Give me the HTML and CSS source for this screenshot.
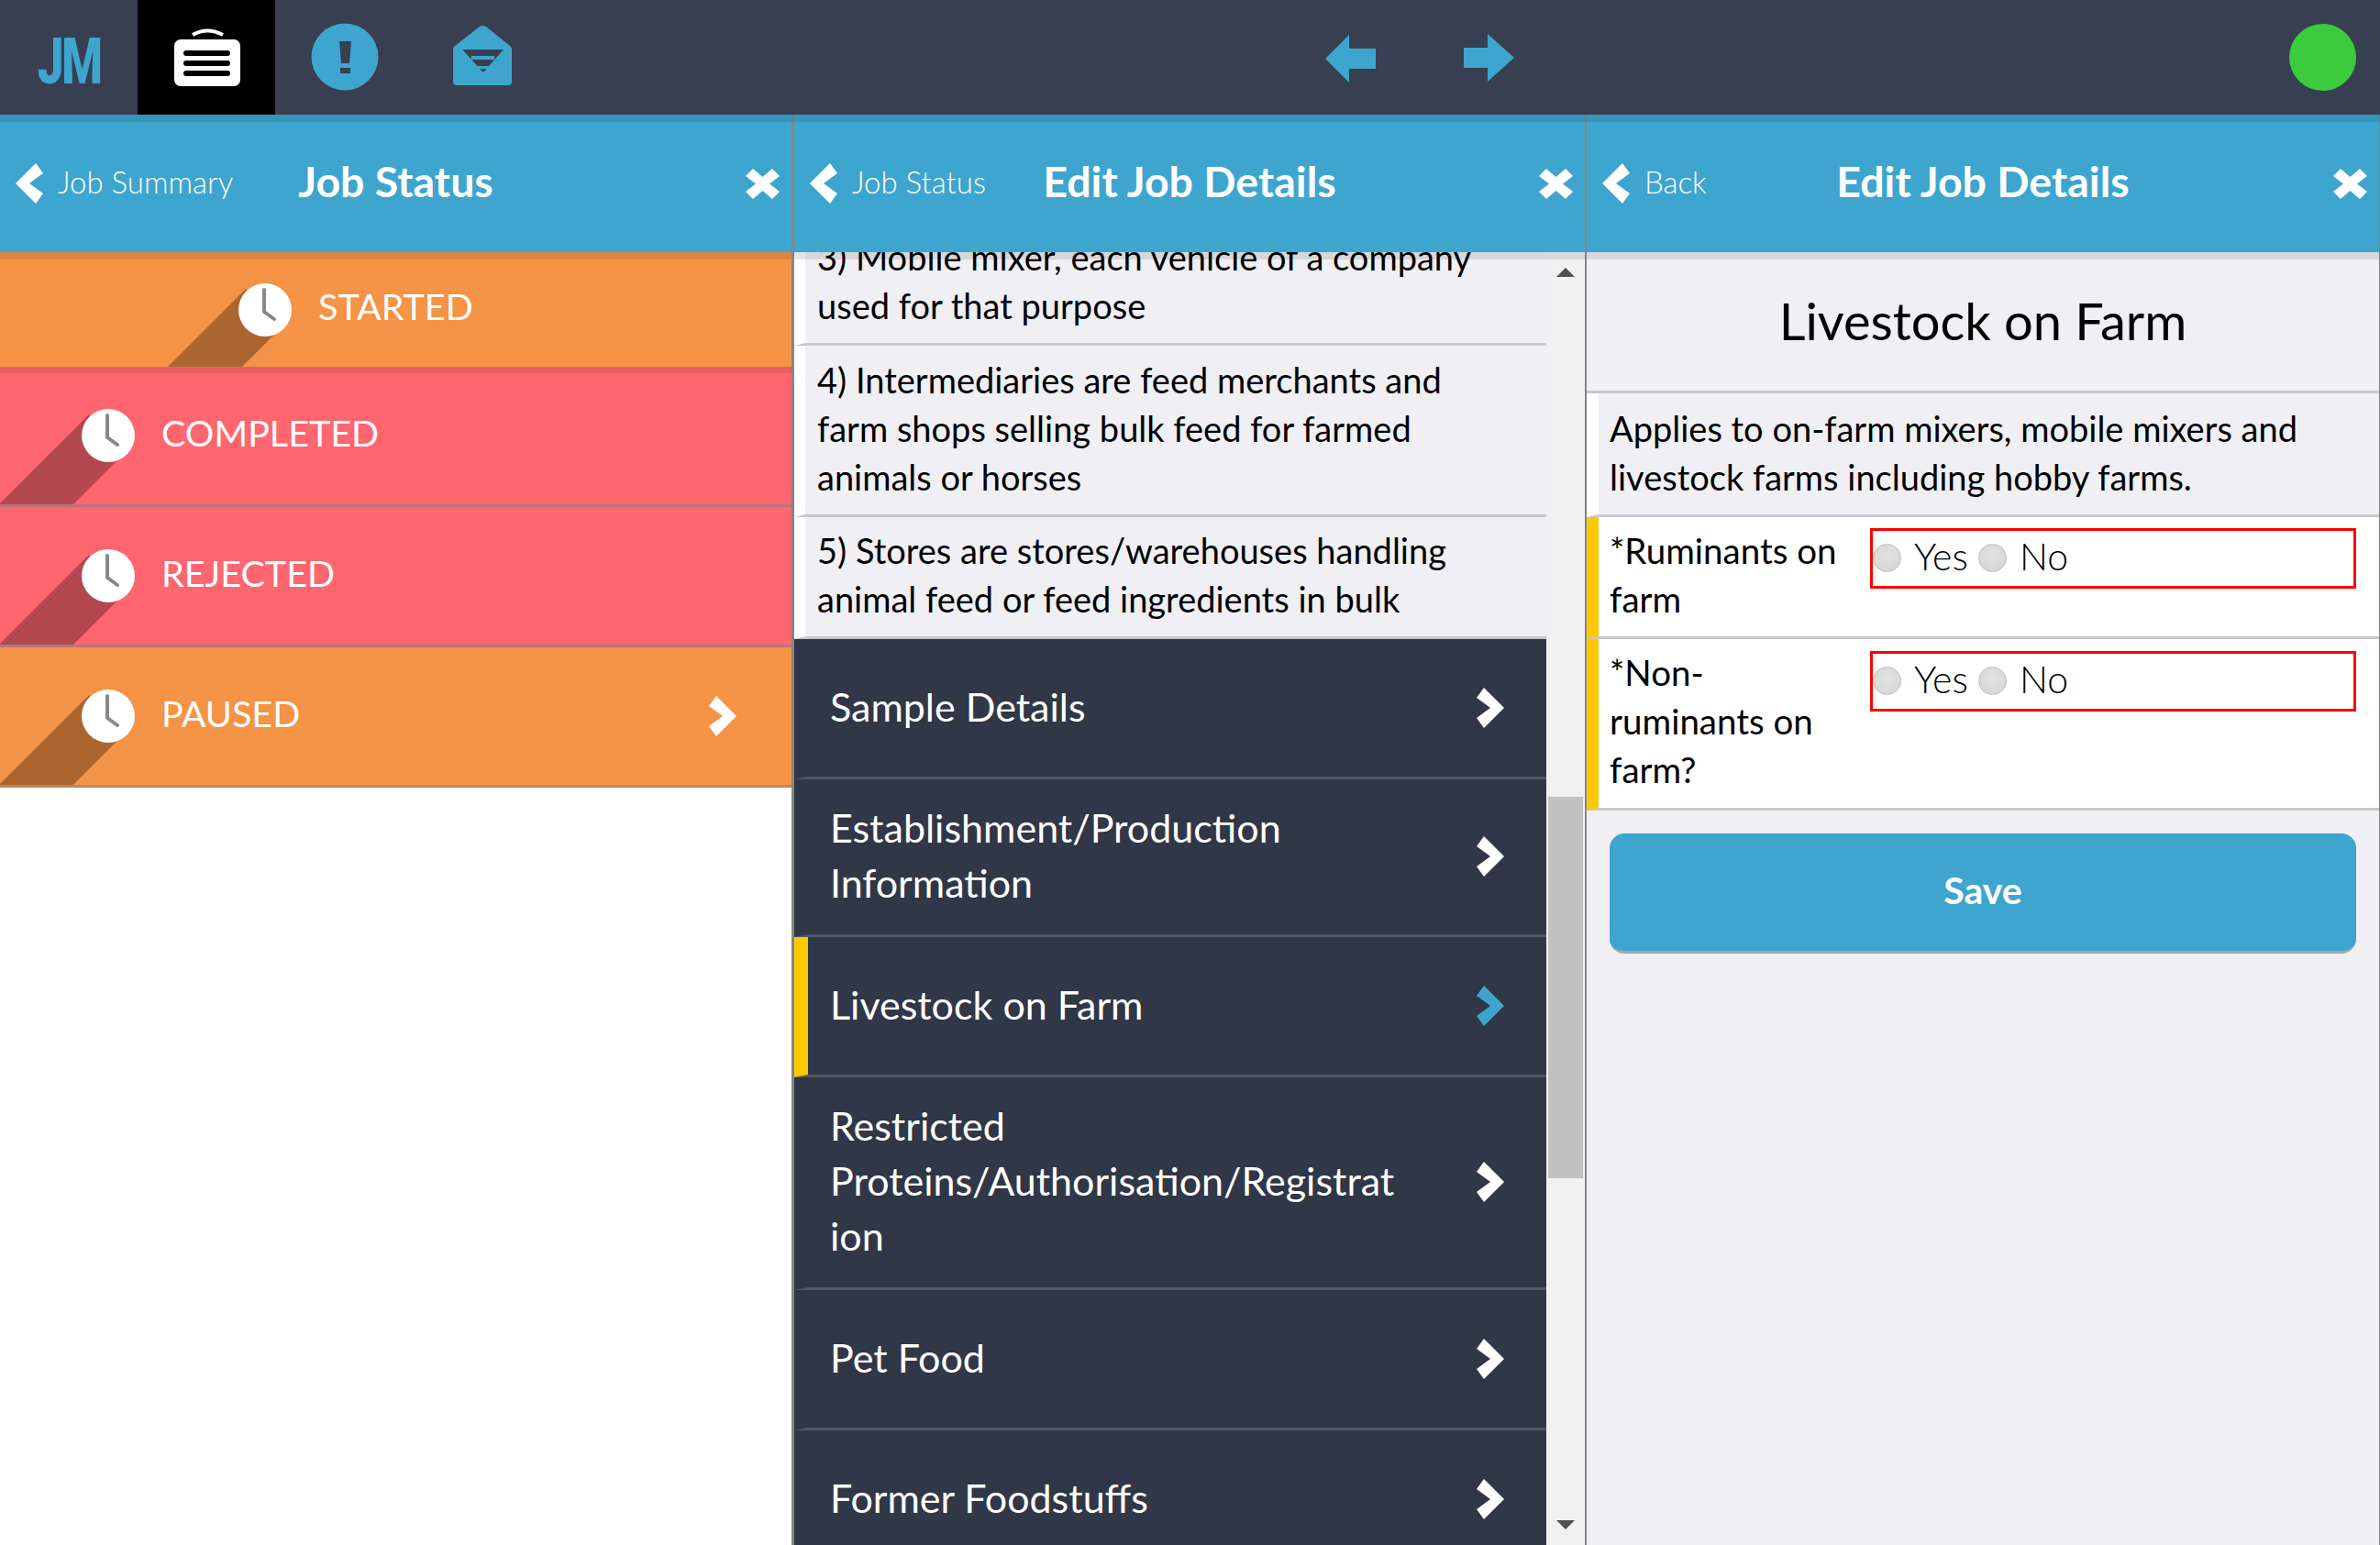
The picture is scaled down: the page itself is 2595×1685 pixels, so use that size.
FILE: index.html
```
<!DOCTYPE html>
<html>
<head>
    <title>Edit Job Details</title>
    <link rel="stylesheet" href="styles.css">
</head>
<body>
    <svg class="defs" width="0" height="0">
        <symbol id="chev-left" viewBox="0 0 30 44"><polygon points="22,0 30,11 15,22 30,33 22,44 0,22"/></symbol>
        <symbol id="chev-right" viewBox="0 0 30 44"><polygon points="8,0 0,11 15,22 0,33 8,44 30,22"/></symbol>
        <symbol id="close" viewBox="0 0 37 33"><polygon points="8,0 18.5,9 29,0 37,8 26,16.5 37,25 29,33 18.5,24 8,33 0,25 11,16.5 0,8"/></symbol>
        <symbol id="clock" viewBox="-29 -29 58 58">
            <polygon class="clock-shadow" points="-21,-23 -221,177 -140,177 10,27"/>
            <circle r="29" fill="#fff"/>
            <path d="M-1 -22V2L10 10" fill="none" stroke="#888" stroke-width="4" stroke-linecap="round" stroke-linejoin="round"/>
        </symbol>
    </svg>

    <div class="topbar">
        <div class="tab"><span class="logo">JM</span></div>
        <div class="tab tab-active">
            <svg width="150" height="125" viewBox="150 0 150 125">
                <path d="M210 38q16-9 33 0" fill="none" stroke="#fff" stroke-width="4"/>
                <rect x="190" y="43" width="72" height="51" rx="7" fill="#fff"/>
                <rect x="200" y="55" width="51" height="6" rx="3" fill="#000"/>
                <rect x="200" y="66" width="51" height="6" rx="3" fill="#000"/>
                <rect x="200" y="77" width="51" height="6" rx="3" fill="#000"/>
            </svg>
        </div>
        <div class="tab">
            <svg width="150" height="125" viewBox="300 0 150 125">
                <circle cx="376" cy="62" r="36.5" fill="#3ea5ce"/>
                <polygon points="370,45 383,45 381,69 372,69" fill="#373f51"/>
                <rect x="371" y="74" width="11" height="6" fill="#373f51"/>
            </svg>
        </div>
        <div class="tab">
            <svg width="150" height="125" viewBox="450 0 150 125">
                <path d="M523 29q3-2 7 0L556 50q2 2 2 4V89q0 4-4 4H498q-4 0-4-4V54q0-2 2-4Z" fill="#3ea5ce"/>
                <polygon points="504,54 549,54 527,79" fill="#373f51"/>
                <rect x="514" y="61" width="25" height="4" fill="#3ea5ce"/>
                <rect x="510" y="72" width="34" height="3" fill="#3ea5ce"/>
            </svg>
        </div>
        <div class="history">
            <svg width="301" height="125" viewBox="1400 0 301 125">
                <polygon points="1445,64 1471,38 1471,53 1500,53 1500,75 1471,75 1471,90" fill="#3ea5ce"/>
                <polygon points="1651,63 1622,37 1622,52 1596,52 1596,74 1622,74 1622,89" fill="#3ea5ce"/>
            </svg>
        </div>
        <div class="status-dot"></div>
    </div>

    <div class="panes">
        <div class="pane pane-status">
            <div class="pane-head">
                <div class="back"><svg class="chev"><use href="#chev-left"/></svg><span>Job Summary</span></div>
                <h1>Job Status</h1>
                <svg class="close"><use href="#close"/></svg>
            </div>
            <div class="status status-first orange">
                <svg class="clock"><use href="#clock"/></svg>
                <span>STARTED</span>
            </div>
            <div class="status red">
                <svg class="clock"><use href="#clock"/></svg>
                <span>COMPLETED</span>
            </div>
            <div class="status red">
                <svg class="clock"><use href="#clock"/></svg>
                <span>REJECTED</span>
            </div>
            <div class="status orange">
                <svg class="clock"><use href="#clock"/></svg>
                <span>PAUSED</span>
                <svg class="chev status-chev"><use href="#chev-right"/></svg>
            </div>
        </div>

        <div class="pane pane-menu">
            <div class="pane-head">
                <div class="back"><svg class="chev"><use href="#chev-left"/></svg><span>Job Status</span></div>
                <h1>Edit Job Details</h1>
                <svg class="close"><use href="#close"/></svg>
            </div>
            <div class="menu-body">
                <div class="menu-list">
                    <div class="note note-first">3) Mobile mixer, each vehicle of a company<br>used for that purpose</div>
                    <div class="note">4) Intermediaries are feed merchants and<br>farm shops selling bulk feed for farmed<br>animals or horses</div>
                    <div class="note note-last">5) Stores are stores/warehouses handling<br>animal feed or feed ingredients in bulk</div>
                    <div class="menu-row"><span>Sample Details</span><svg class="chev"><use href="#chev-right"/></svg></div>
                    <div class="menu-row"><span>Establishment/Production<br>Information</span><svg class="chev"><use href="#chev-right"/></svg></div>
                    <div class="menu-row menu-row-active"><span>Livestock on Farm</span><svg class="chev"><use href="#chev-right"/></svg></div>
                    <div class="menu-row"><span>Restricted<br>Proteins/Authorisation/Registrat<br>ion</span><svg class="chev"><use href="#chev-right"/></svg></div>
                    <div class="menu-row"><span>Pet Food</span><svg class="chev"><use href="#chev-right"/></svg></div>
                    <div class="menu-row"><span>Former Foodstuffs</span><svg class="chev"><use href="#chev-right"/></svg></div>
                </div>
                <div class="scrollbar">
                    <div class="arrow-up"></div>
                    <div class="thumb"></div>
                    <div class="arrow-down"></div>
                </div>
            </div>
        </div>

        <div class="pane pane-form">
            <div class="pane-head">
                <div class="back"><svg class="chev"><use href="#chev-left"/></svg><span>Back</span></div>
                <h1>Edit Job Details</h1>
                <svg class="close"><use href="#close"/></svg>
            </div>
            <h2 class="form-title">Livestock on Farm</h2>
            <div class="form-note">Applies to on-farm mixers, mobile mixers and<br>livestock farms including hobby farms.</div>
            <div class="form-row">
                <div class="form-label">*Ruminants on<br>farm</div>
                <div class="answer">
                    <input type="radio" name="ruminants" id="r-yes"><label for="r-yes">Yes</label>
                    <input type="radio" name="ruminants" id="r-no"><label for="r-no">No</label>
                </div>
            </div>
            <div class="form-row">
                <div class="form-label">*Non-<br>ruminants on<br>farm?</div>
                <div class="answer">
                    <input type="radio" name="nonruminants" id="n-yes"><label for="n-yes">Yes</label>
                    <input type="radio" name="nonruminants" id="n-no"><label for="n-no">No</label>
                </div>
            </div>
            <button class="save">Save</button>
        </div>
    </div>
</body>
</html>
```

FILE: styles.css
```
* {
    box-sizing: border-box;
}
html, body {
    margin: 0;
    height: 100%;
    overflow: hidden;
}
body {
    display: flex;
    flex-direction: column;
    font-family: Lato, "Open Sans", sans-serif;
    font-size: 38px;
    color: #000;
    background: #fff;
}
.defs {
    position: absolute;
}
symbol {
    overflow: visible;
}

/* top bar */
.topbar {
    display: flex;
    flex: none;
    height: 125px;
    background: #373f51;
    position: relative;
    z-index: 3;
    box-shadow: 0 8px 0 rgba(0, 0, 0, .1);
}
.tab {
    display: flex;
    align-items: center;
    justify-content: center;
    width: 150px;
}
.tab svg {
    display: block;
}
.tab-active {
    background: #000;
}
.logo {
    font-family: Roboto, sans-serif;
    font-weight: 900;
    font-size: 70px;
    line-height: 1;
    letter-spacing: -3px;
    color: #3ea5ce;
    transform: scaleX(.73);
    padding-top: 8px;
}
.history {
    margin-left: 800px;
}
.history svg {
    display: block;
}
.status-dot {
    width: 73px;
    height: 73px;
    margin: 26px 26px 0 auto;
    border-radius: 50%;
    background: #3ccb3c;
}

/* panes */
.panes {
    display: grid;
    grid-template-columns: 866px 864px 1fr;
    flex: 1;
    min-height: 0;
}
.pane {
    display: flex;
    flex-direction: column;
    min-width: 0;
    overflow: hidden;
    border-right: 3px solid #858585;
}
.pane-menu {
    border-right-width: 2px;
}
.pane-form {
    border-right-width: 1px;
    background: #efeff4;
}
.pane-head {
    display: grid;
    grid-template-columns: 1fr auto 1fr;
    align-items: center;
    flex: none;
    height: 150px;
    background: #3ea5ce;
    color: #fff;
    position: relative;
    z-index: 2;
    box-shadow: 0 8px 0 rgba(0, 0, 0, .1);
}
.pane-head h1 {
    margin: 0;
    font-size: 46.5px;
    font-weight: 700;
    padding-bottom: 6px;
}
.back {
    display: flex;
    align-items: center;
    gap: 16px;
    padding-left: 17px;
    font-size: 33px;
    font-weight: 300;
}
.back span {
    padding-bottom: 4px;
}
.chev {
    display: block;
    flex: none;
    width: 30px;
    height: 44px;
    fill: currentColor;
}
.close {
    justify-self: end;
    width: 37px;
    height: 33px;
    margin-right: 13px;
    fill: #fff;
}

/* status list */
.status {
    display: flex;
    align-items: center;
    gap: 29px;
    flex: none;
    height: 153px;
    padding-left: 89px;
    overflow: hidden;
    border-bottom: 3px solid;
    color: #fff;
    font-size: 39.5px;
}
.status span {
    padding-bottom: 8px;
}
.status-first {
    height: 125px;
    padding-left: 260px;
    border-bottom: 0;
    position: relative;
    z-index: 1;
    box-shadow: 0 7px 0 rgba(0, 0, 0, .08);
}
.orange {
    background: #f59346;
    border-color: #b58a5c;
}
.red {
    background: #ff6670;
    border-color: #b87478;
}
.clock {
    width: 58px;
    height: 58px;
    flex: none;
    overflow: visible;
}
.clock-shadow {
    fill: rgba(0, 0, 0, .3);
}
.status-chev {
    margin-left: auto;
    margin-right: 60px;
}

/* menu pane */
.menu-body {
    display: flex;
    flex: 1;
    min-height: 0;
}
.menu-list {
    flex: 1;
    min-width: 0;
    overflow: hidden;
}
.note {
    padding: 11px 20px 14px 13px;
    line-height: 53px;
    white-space: nowrap;
    background: #efeff4;
    border-left: 12px solid #fff;
    border-bottom: 3px solid #c8c7cc;
}
.note-first {
    margin-top: -32px;
}
.note-last {
    padding: 10px 20px 14px 13px;
}
.menu-row {
    display: flex;
    align-items: center;
    justify-content: space-between;
    min-height: 153px;
    padding: 25px 46px 26px 24px;
    font-size: 43px;
    line-height: 60px;
    color: #fff;
    background: #303746;
    border-left: 15px solid #303746;
    border-bottom: 3px solid #525762;
}
.menu-row span {
    margin-top: -2px;
}
.menu-row-active {
    border-left-color: #ffc800;
}
.menu-row-active .chev {
    color: #3ea5ce;
}
.scrollbar {
    display: flex;
    flex-direction: column;
    align-items: center;
    flex: none;
    width: 42px;
    padding: 17px 0;
    background: #f1f1f1;
}
.arrow-up,
.arrow-down {
    width: 0;
    height: 0;
    border-left: 10px solid transparent;
    border-right: 10px solid transparent;
}
.arrow-up {
    border-bottom: 10px solid #505050;
}
.arrow-down {
    margin-top: auto;
    border-top: 10px solid #505050;
}
.thumb {
    width: 38px;
    height: 416px;
    margin-top: 567px;
    background: #c1c1c1;
}

/* form pane */
.form-title {
    flex: none;
    height: 154px;
    margin: 0;
    padding-bottom: 6px;
    font-size: 56px;
    font-weight: 400;
    line-height: 150px;
    text-align: center;
    border-bottom: 3px solid #c8c7cc;
}
.form-note {
    flex: none;
    padding: 12px 20px 14px 12px;
    line-height: 53px;
    white-space: nowrap;
    border-left: 13px solid #fff;
    border-bottom: 3px solid #c8c7cc;
}
.form-row {
    display: grid;
    grid-template-columns: 284px 1fr;
    flex: none;
    padding: 10px 25px 14px 12px;
    font-size: 38.5px;
    line-height: 53px;
    background: #fff;
    border-left: 13px solid #ffc800;
    border-bottom: 3px solid #c8c7cc;
}
.form-row + .form-row {
    padding-bottom: 15px;
}
.form-row + .form-row .answer {
    margin-top: 3px;
}
.answer {
    display: flex;
    align-items: center;
    align-self: start;
    height: 66px;
    margin-top: 2px;
    border: 3px solid #f00;
    font-size: 41px;
    font-weight: 300;
}
.answer input {
    appearance: none;
    width: 31px;
    height: 31px;
    margin: 0 14px 2px 0;
    flex: none;
    border: 1px solid #bdbdbd;
    border-radius: 50%;
    background: radial-gradient(circle at 50% 40%, #e2e2e2, #d4d4d4);
}
.answer label {
    margin-right: 11px;
    padding-bottom: 6px;
}
.save {
    flex: none;
    height: 131px;
    margin: 25px 25px 0;
    padding-bottom: 6px;
    border: 0;
    border-bottom: 3px solid #a3a7ad;
    border-radius: 16px;
    background: #3ea5ce;
    color: #fff;
    font-family: inherit;
    font-size: 41px;
    font-weight: 700;
}
```
